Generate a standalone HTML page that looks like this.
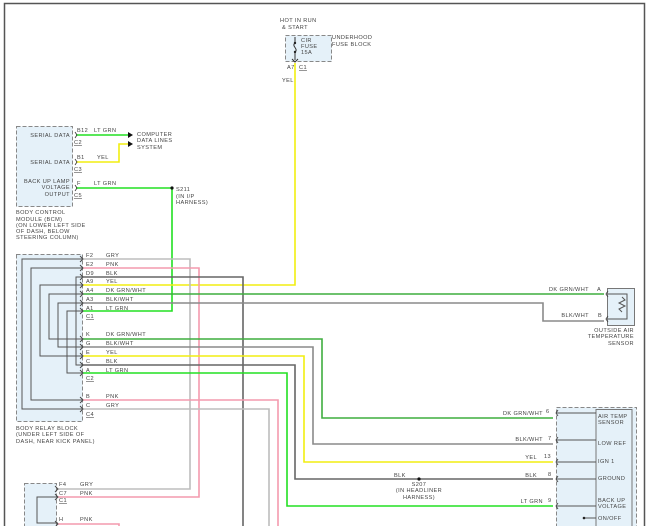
<!DOCTYPE html>
<html><head><meta charset="utf-8"><style>
html,body{margin:0;padding:0;background:#fff;width:650px;height:526px;overflow:hidden}
svg text{font-family:"Liberation Sans",sans-serif;font-size:5.6px;fill:#444;letter-spacing:0.4px}
</style></head><body>
<svg width="650" height="526" viewBox="0 0 650 526" xmlns="http://www.w3.org/2000/svg">
<!-- frame -->
<path d="M4.5 526 V3.5 H644.5 V526" fill="none" stroke="#555" stroke-width="1.5"/>

<!-- boxes -->
<g fill="#e5f1f9" stroke="#888" stroke-width="1" stroke-dasharray="4,2">
<rect x="285.5" y="35.5" width="46" height="26"/>
<rect x="16.5" y="126.5" width="56" height="80"/>
<rect x="16.5" y="254.5" width="66" height="167"/>
<rect x="24.5" y="483.5" width="32" height="50"/>
<rect x="556.5" y="407.5" width="80" height="130"/>
</g>
<rect x="607.5" y="288.5" width="27" height="37" fill="#e5f1f9" stroke="#777"/>
<rect x="596" y="409.5" width="36" height="130" fill="#e5f1f9" stroke="#777"/>

<!-- fuse -->
<g stroke="#333" stroke-width="1" fill="none">
<path d="M295 37 V43 M295 52 V60 M295 43 C291 46,299 49,295 52"/>
</g>
<circle cx="295" cy="43" r="1.2" fill="#222"/><circle cx="295" cy="52" r="1.2" fill="#222"/>
<path d="M292 59 L295 62 L298 59" stroke="#333" fill="none"/>
<text x="280" y="22">HOT IN RUN</text><text x="282" y="29">&amp; START</text>
<text x="301" y="42">CIR</text><text x="301" y="48">FUSE</text><text x="301" y="54">15A</text>
<text x="332" y="39">UNDERHOOD</text><text x="332" y="46">FUSE BLOCK</text>
<text x="287" y="69">A7</text><text x="299" y="69" text-decoration="underline">C1</text>
<text x="282" y="82">YEL</text>

<!-- relay block inner lines -->
<g stroke="#555" stroke-width="1" fill="none">
<path d="M82 259 H22 V409 H82"/>
<path d="M82 268 H31 V400 H82"/>
<path d="M82 277 H76 V365 H82"/>
<path d="M82 285 H40 V356 H82"/>
<path d="M82 294 H49 V339 H82"/>
<path d="M82 303 H58 V347 H82"/>
<path d="M82 311 H67 V373 H82"/>
<path d="M58 497 H37 V523 H58"/>
<path d="M557 413 H596 M557 440 H596 M557 462 H596 M557 479 H596 M557 506 H596 M584 518 H596"/>
<path d="M608 294 H627 V319 H608"/>
<path d="M622 297 L625 300 L619 303 L625 306 L619 309 L622 312"/>
</g>
<circle cx="584" cy="518" r="1.3" fill="#222"/>

<!-- wires -->
<g fill="none" stroke-width="1.6">
<path d="M76 135 H128" stroke="#22e022"/>
<path d="M76 162 H119 V144 H128" stroke="#f2ee10"/>
<path d="M76 188 H172 V311 H83" stroke="#22e022"/>
<path d="M295 63 V285 H83" stroke="#f2ee10"/>
<path d="M83 259 H190 V489 H58" stroke="#bdbdbd"/>
<path d="M83 268 H199 V497 H58" stroke="#f49aae"/>
<path d="M83 277 H243 V526" stroke="#666"/>
<path d="M83 294 H604" stroke="#3fae3f"/>
<path d="M83 303 H543 V321 H604" stroke="#8a8a8a"/>
<path d="M83 339 H322 V418 H553" stroke="#3fae3f"/>
<path d="M83 347 H313 V444 H553" stroke="#8a8a8a"/>
<path d="M83 356 H304 V462 H553" stroke="#f2ee10"/>
<path d="M83 365 H295 V479 H553" stroke="#666"/>
<path d="M83 373 H287 V506 H553" stroke="#22e022"/>
<path d="M83 400 H278 V526" stroke="#f49aae"/>
<path d="M83 409 H269 V526" stroke="#bdbdbd"/>
<path d="M58 524 H119 V526" stroke="#f49aae"/>
</g>
<path d="M128 132 L133 135 L128 138Z M128 141 L133 144 L128 147Z" fill="#111"/>
<circle cx="172" cy="188" r="1.6" fill="#111"/>
<circle cx="419" cy="479" r="1.6" fill="#111"/>

<!-- connector chevrons -->
<g stroke="#444" stroke-width="0.9" fill="none">
<path d="M75 132 l2 3 l-2 3 M75 159 l2 3 l-2 3 M75 185 l2 3 l-2 3"/>
<path d="M80 256 l3 3 l-3 3 M80 265 l3 3 l-3 3 M80 274 l3 3 l-3 3 M80 282 l3 3 l-3 3 M80 291 l3 3 l-3 3 M80 300 l3 3 l-3 3 M80 308 l3 3 l-3 3"/>
<path d="M80 336 l3 3 l-3 3 M80 344 l3 3 l-3 3 M80 353 l3 3 l-3 3 M80 362 l3 3 l-3 3 M80 370 l3 3 l-3 3 M80 397 l3 3 l-3 3 M80 406 l3 3 l-3 3"/>
<path d="M55 486 l3 3 l-3 3 M55 494 l3 3 l-3 3 M55 521 l3 3 l-3 3"/>
<path d="M558 410 l-2 3 l2 3 M558 437 l-2 3 l2 3 M558 459 l-2 3 l2 3 M558 476 l-2 3 l2 3 M558 503 l-2 3 l2 3"/>
<path d="M608 291 l-2 3 l2 3 M608 316 l-2 3 l2 3"/>
</g>

<!-- BCM text -->
<g text-anchor="end">
<text x="70" y="137">SERIAL DATA</text>
<text x="70" y="164">SERIAL DATA</text>
<text x="70" y="183">BACK UP LAMP</text>
<text x="70" y="189">VOLTAGE</text>
<text x="70" y="196">OUTPUT</text>
</g>
<text x="77" y="132">B12</text><text x="94" y="132">LT GRN</text>
<text x="74" y="144" text-decoration="underline">C2</text>
<text x="77" y="159">B1</text><text x="97" y="159">YEL</text>
<text x="74" y="171" text-decoration="underline">C3</text>
<text x="77" y="185">F</text><text x="94" y="185">LT GRN</text>
<text x="74" y="197" text-decoration="underline">C5</text>
<text x="137" y="136">COMPUTER</text><text x="137" y="142">DATA LINES</text><text x="137" y="149">SYSTEM</text>
<text x="176" y="191">S211</text><text x="176" y="198">(IN I/P</text><text x="176" y="204">HARNESS)</text>
<text x="16" y="214">BODY CONTROL</text><text x="16" y="221">MODULE (BCM)</text><text x="16" y="227">(ON LOWER LEFT SIDE</text><text x="16" y="233">OF DASH, BELOW</text><text x="16" y="239">STEERING COLUMN)</text>

<!-- relay block text -->
<g>
<text x="86" y="257">F2</text><text x="106" y="257">GRY</text>
<text x="86" y="266">E2</text><text x="106" y="266">PNK</text>
<text x="86" y="275">D9</text><text x="106" y="275">BLK</text>
<text x="86" y="283">A9</text><text x="106" y="283">YEL</text>
<text x="86" y="292">A4</text><text x="106" y="292">DK GRN/WHT</text>
<text x="86" y="301">A3</text><text x="106" y="301">BLK/WHT</text>
<text x="86" y="310">A1</text><text x="106" y="310">LT GRN</text>
<text x="86" y="318" text-decoration="underline">C1</text>
<text x="86" y="336">K</text><text x="106" y="336">DK GRN/WHT</text>
<text x="86" y="345">G</text><text x="106" y="345">BLK/WHT</text>
<text x="86" y="354">E</text><text x="106" y="354">YEL</text>
<text x="86" y="363">C</text><text x="106" y="363">BLK</text>
<text x="86" y="372">A</text><text x="106" y="372">LT GRN</text>
<text x="86" y="380" text-decoration="underline">C2</text>
<text x="86" y="398">B</text><text x="106" y="398">PNK</text>
<text x="86" y="407">C</text><text x="106" y="407">GRY</text>
<text x="86" y="416" text-decoration="underline">C4</text>
</g>
<text x="16" y="430">BODY RELAY BLOCK</text><text x="16" y="436">(UNDER LEFT SIDE OF</text><text x="16" y="443">DASH, NEAR KICK PANEL)</text>

<text x="59" y="486">F4</text><text x="80" y="486">GRY</text>
<text x="59" y="495">C7</text><text x="80" y="495">PNK</text>
<text x="59" y="502" text-decoration="underline">C1</text>
<text x="59" y="521">H</text><text x="80" y="521">PNK</text>

<!-- right side text -->
<g text-anchor="end">
<text x="589" y="291">DK GRN/WHT</text>
<text x="589" y="317">BLK/WHT</text>
<text x="634" y="332">OUTSIDE AIR</text>
<text x="634" y="338">TEMPERATURE</text>
<text x="634" y="345">SENSOR</text>
<text x="543" y="415">DK GRN/WHT</text>
<text x="543" y="441">BLK/WHT</text>
<text x="537" y="459">YEL</text>
<text x="537" y="477">BLK</text>
<text x="543" y="503">LT GRN</text>
</g>
<text x="597" y="291">A</text><text x="598" y="317">B</text>
<text x="546" y="413">6</text><text x="548" y="440">7</text><text x="544" y="458">13</text><text x="548" y="476">8</text><text x="548" y="502">9</text>
<text x="394" y="477">BLK</text>
<text x="419" y="486" text-anchor="middle">S207</text>
<text x="419" y="492" text-anchor="middle">(IN HEADLINER</text>
<text x="419" y="499" text-anchor="middle">HARNESS)</text>
<text x="598" y="418">AIR TEMP</text><text x="598" y="424">SENSOR</text>
<text x="598" y="445">LOW REF</text>
<text x="598" y="463">IGN 1</text>
<text x="598" y="480">GROUND</text>
<text x="598" y="502">BACK UP</text><text x="598" y="508">VOLTAGE</text>
<text x="598" y="520">ON/OFF</text>
</svg>
</body></html>
